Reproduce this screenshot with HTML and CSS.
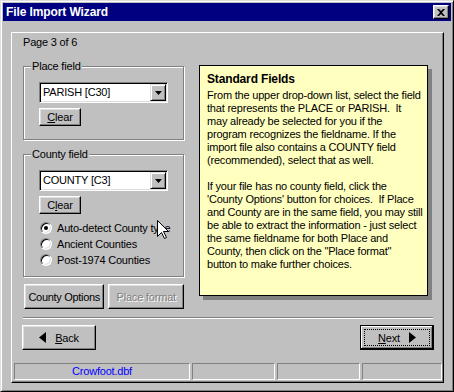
FILE: index.html
```html
<!DOCTYPE html>
<html lang="en">
<head>
    <meta charset="UTF-8">
    <title>File Import Wizard</title>
    <link rel="stylesheet" href="styles.css">
</head>
<body>
    <div class="window">
        <div class="titlebar">
            <span class="title">File Import Wizard</span>
            <button class="close-btn">
                <svg width="8" height="7" viewBox="0 0 8 7"><path d="M0 0h2l2 2 2-2h2l-3 3.5 3 3.5h-2l-2-2-2 2h-2l3-3.5z" fill="#000"/></svg>
            </button>
        </div>

        <div class="panel">
            <div class="page-label">Page 3 of 6</div>

            <div class="content">
                <div class="fields">
                    <fieldset class="group">
                        <legend>Place field</legend>
                        <div class="combo">
                            <span class="combo-value">PARISH [C30]</span>
                            <span class="combo-arrow"><svg width="7" height="4" viewBox="0 0 7 4"><path d="M0 0h7l-3.5 4z" fill="#000"/></svg></span>
                        </div>
                        <button class="btn clear-btn"><u>C</u>lear</button>
                    </fieldset>

                    <fieldset class="group county-group">
                        <legend>County field</legend>
                        <div class="combo">
                            <span class="combo-value">COUNTY [C3]</span>
                            <span class="combo-arrow"><svg width="7" height="4" viewBox="0 0 7 4"><path d="M0 0h7l-3.5 4z" fill="#000"/></svg></span>
                        </div>
                        <button class="btn clear-btn">C<u>l</u>ear</button>
                        <div class="radio-list">
                            <div class="radio"><span class="radio-dot checked"></span>Auto-detect County type</div>
                            <div class="radio"><span class="radio-dot"></span>Ancient Counties</div>
                            <div class="radio"><span class="radio-dot"></span>Post-1974 Counties</div>
                        </div>
                    </fieldset>

                    <div class="option-buttons">
                        <button class="btn options-btn">County Options</button>
                        <button class="btn format-btn" disabled>Place format</button>
                    </div>
                </div>

                <div class="note">
                    <div class="note-title">Standard Fields</div>
                    <p>From the upper drop-down list, select the field<br>
                    that represents the PLACE or PARISH.&nbsp; It<br>
                    may already be selected for you if the<br>
                    program recognizes the fieldname. If the<br>
                    import file also contains a COUNTY field<br>
                    (recommended), select that as well.</p>
                    <p>If your file has no county field, click the<br>
                    'County Options' button for choices.&nbsp; If Place<br>
                    and County are in the same field, you may still<br>
                    be able to extract the information - just select<br>
                    the same fieldname for both Place and<br>
                    County, then click on the "Place format"<br>
                    button to make further choices.</p>
                </div>
            </div>

            <div class="separator"></div>

            <div class="nav">
                <button class="btn nav-btn">
                    <svg width="7" height="11" viewBox="0 0 7 11"><path d="M7 0v11L0 5.5z" fill="#000"/></svg>
                    <span><u>B</u>ack</span>
                </button>
                <button class="btn nav-btn default">
                    <span><u>N</u>ext</span>
                    <svg width="7" height="11" viewBox="0 0 7 11"><path d="M0 0v11l7-5.5z" fill="#000"/></svg>
                </button>
            </div>

            <div class="statusbar">
                <div class="status-cell file">Crowfoot.dbf</div>
                <div class="status-cell mid"></div>
                <div class="status-cell mid"></div>
                <div class="status-cell last"></div>
            </div>
        </div>

        <svg class="cursor" width="12" height="19" viewBox="0 0 12 19">
            <path d="M0.5 0.5V16.5L4.5 12.5L7.5 18.5L9.5 17.5L6.5 11.5H11.5Z" fill="#fff" stroke="#000"/>
        </svg>
    </div>
</body>
</html>
```

FILE: styles.css
```css
* {
    box-sizing: border-box;
}

body {
    margin: 0;
    font-family: 'Liberation Sans', Arial, sans-serif;
    font-size: 11px;
    letter-spacing: -0.2px;
    color: #000;
}

button {
    font: inherit;
    letter-spacing: inherit;
    color: inherit;
    padding: 0;
}

.window {
    position: relative;
    width: 454px;
    height: 392px;
    background: #c0c0c0;
    border: 1px solid;
    border-color: #dfdfdf #000 #000 #dfdfdf;
    box-shadow: inset 1px 1px #fff, inset -1px -1px #808080;
    padding: 2px;
    display: flex;
    flex-direction: column;
}

.titlebar {
    height: 18px;
    background: #000080;
    display: flex;
    align-items: center;
    justify-content: space-between;
    padding: 0 2px 0 3px;
}

.title {
    color: #fff;
    font-weight: bold;
    font-size: 12px;
    letter-spacing: -0.1px;
    line-height: 18px;
}

.close-btn {
    width: 16px;
    height: 14px;
    background: #c0c0c0;
    border: 1px solid;
    border-color: #fff #000 #000 #fff;
    box-shadow: inset -1px -1px #808080, inset 1px 1px #dfdfdf;
    display: flex;
    align-items: center;
    justify-content: center;
}

.panel {
    flex: 1;
    margin: 11px 7px 6px 8px;
    border: 1px solid;
    border-color: #fff #000 #000 #fff;
    box-shadow: inset -1px -1px #808080;
    padding-top: 3px;
    display: flex;
    flex-direction: column;
}

.page-label {
    margin-left: 11px;
    line-height: 13px;
}

.content {
    display: flex;
    align-items: flex-start;
    margin-top: 11px;
    padding-left: 11px;
}

.fields {
    width: 161px;
    display: flex;
    flex-direction: column;
}

.group {
    margin: 0;
    min-inline-size: 0;
    padding: 9px 15px 13px;
    border: 1px solid #808080;
    box-shadow: inset 1px 1px #fff, 1px 1px #fff;
}

.group legend {
    padding: 0 1px;
    margin-left: -8px;
    line-height: 13px;
    background: #c0c0c0;
}

.county-group {
    margin-top: 8px;
    padding-bottom: 8px;
}

.combo {
    width: 129px;
    height: 21px;
    background: #fff;
    border: 1px solid;
    border-color: #808080 #fff #fff #808080;
    box-shadow: inset 1px 1px #000, inset -1px -1px #dfdfdf;
    padding: 1px;
    display: flex;
    justify-content: space-between;
}

.combo-value {
    padding-left: 2px;
    line-height: 17px;
}

.combo-arrow {
    width: 16px;
    height: 17px;
    background: #c0c0c0;
    border: 1px solid;
    border-color: #dfdfdf #000 #000 #dfdfdf;
    box-shadow: inset 1px 1px #fff, inset -1px -1px #808080;
    display: flex;
    align-items: center;
    justify-content: center;
}

.btn {
    position: relative;
    background: #c0c0c0;
    border: 1px solid;
    border-color: #fff #000 #000 #fff;
    box-shadow: inset -1px -1px #808080, inset 1px 1px #dfdfdf;
    display: flex;
    align-items: center;
    justify-content: center;
}

.btn:disabled {
    color: #808080;
    text-shadow: 1px 1px #fff;
}

.clear-btn {
    width: 42px;
    height: 18px;
    margin-top: 5px;
}

.radio-list {
    margin-top: 6px;
    display: flex;
    flex-direction: column;
}

.radio {
    height: 16px;
    display: flex;
    align-items: center;
    gap: 5px;
    padding-left: 1px;
    white-space: nowrap;
}

.radio-dot {
    position: relative;
    width: 12px;
    height: 12px;
    flex: none;
    border-radius: 50%;
    background: #fff;
    border: 1px solid;
    border-color: #808080 #fff #fff #808080;
    box-shadow: inset 1px 1px #000, inset -1px -1px #dfdfdf;
}

.radio-dot.checked::after {
    content: '';
    position: absolute;
    left: 3px;
    top: 3px;
    width: 4px;
    height: 4px;
    border-radius: 50%;
    background: #000;
}

.option-buttons {
    display: flex;
    gap: 4px;
    margin-top: 7px;
    padding-left: 1px;
}

.options-btn {
    width: 81px;
    height: 25px;
    letter-spacing: -0.3px;
}

.format-btn {
    width: 76px;
    height: 25px;
}

.note {
    margin: 5px 0 0 15px;
    width: 229px;
    height: 231px;
    background: #ffffc0;
    border: 1px solid #000;
    box-shadow: 4px 4px 0 #808080;
    padding: 7px 4px 0 7px;
    line-height: 13px;
}

.note-title {
    font-weight: bold;
    font-size: 12px;
    letter-spacing: -0.15px;
    margin-bottom: 3px;
}

.note p {
    margin: 0 0 13px;
    white-space: nowrap;
}

.separator {
    margin: 8px 10px 0 11px;
    border-top: 1px solid #808080;
    border-bottom: 1px solid #fff;
}

.nav {
    display: flex;
    justify-content: space-between;
    margin-top: 6px;
    padding: 0 9px 0 10px;
}

.nav-btn {
    width: 74px;
    height: 25px;
    gap: 9px;
}

.nav-btn.default {
    border-color: #000;
    box-shadow: inset -1px -1px #000, inset 1px 1px #fff, inset -2px -2px #808080;
}

.nav-btn.default::after {
    content: '';
    position: absolute;
    inset: 3px;
    border: 1px dotted #000;
}

.statusbar {
    display: flex;
    gap: 2px;
    margin-top: 13px;
    padding: 0 1px 0 2px;
}

.status-cell {
    height: 17px;
    border: 1px solid;
    border-color: #808080 #fff #fff #808080;
    text-align: center;
    line-height: 15px;
}

.status-cell.file {
    width: 176px;
    color: #0000ff;
}

.status-cell.mid {
    width: 83px;
}

.status-cell.last {
    flex: 1;
}

.cursor {
    position: absolute;
    left: 156px;
    top: 219px;
}
```
